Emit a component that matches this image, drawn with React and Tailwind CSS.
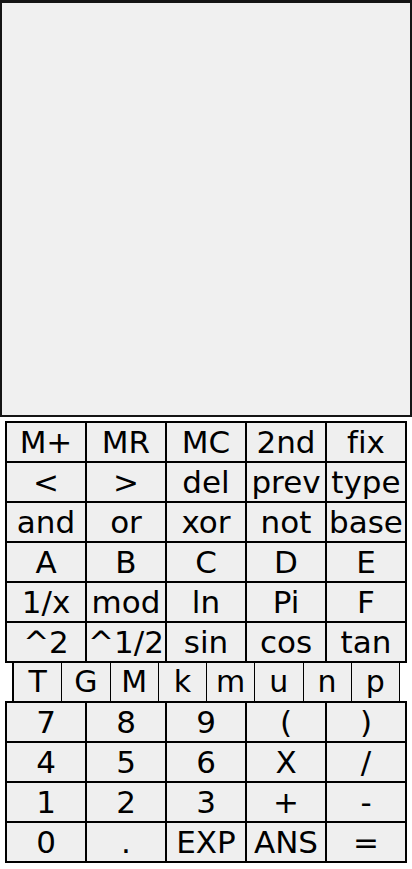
// App.jsx — old-school calculator keypad: display panel plus button grid.

const TOP_ROWS = [
  ['M+', 'MR', 'MC', '2nd', 'fix'],
  ['<', '>', 'del', 'prev', 'type'],
  ['and', 'or', 'xor', 'not', 'base'],
  ['A', 'B', 'C', 'D', 'E'],
  ['1/x', 'mod', 'ln', 'Pi', 'F'],
  ['^2', '^1/2', 'sin', 'cos', 'tan'],
]

const PREFIXES = ['T', 'G', 'M', 'k', 'm', 'u', 'n', 'p']

const NUM_ROWS = [
  ['7', '8', '9', '(', ')'],
  ['4', '5', '6', 'X', '/'],
  ['1', '2', '3', '+', '-'],
  ['0', '.', 'EXP', 'ANS', '='],
]

function Key({ label }) {
  return (
    <div className="h-[38px] bg-[#efefef] flex items-center justify-center text-[31px] leading-none text-black whitespace-nowrap overflow-hidden">
      {label}
    </div>
  )
}

function KeyBlock({ rows }) {
  return (
    <div className="ml-[5px] w-[402px] grid grid-cols-5 gap-[2px] bg-black p-[2px]">
      {rows.flat().map((k, i) => (
        <Key key={i} label={k} />
      ))}
    </div>
  )
}

export default function App() {
  return (
    <div className="w-[412px] min-h-[869px] bg-white font-['DejaVu_Sans',Verdana,sans-serif] [font-variant-ligatures:none]">
      <div className="h-[417px] w-[412px] bg-[#f0f0f0] border-2 border-t-[3px] border-[#151515]" />

      <div className="mt-[4px]">
        <KeyBlock rows={TOP_ROWS} />

        <div className="ml-[12px] w-[388px] h-[38px] grid grid-cols-8 gap-px bg-black border-l-2 border-r border-black">
          {PREFIXES.map((p) => (
            <div
              key={p}
              className="bg-[#efefef] flex items-center justify-center text-[30px] leading-none text-black"
            >
              {p}
            </div>
          ))}
        </div>

        <KeyBlock rows={NUM_ROWS} />
      </div>
    </div>
  )
}
